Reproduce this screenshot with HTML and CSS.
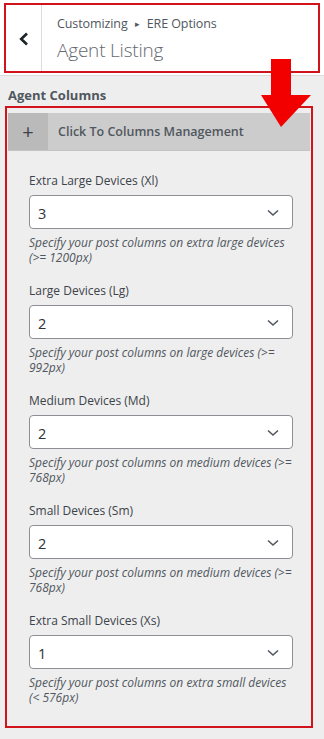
FILE: index.html
```html
<!DOCTYPE html>
<html>
<head>
<meta charset="utf-8">
<link rel="stylesheet" href="styles.css">
</head>
<body>
<div class="page">
  <header class="head">
    <div class="head-box">
      <div class="back">
        <svg width="12" height="14" viewBox="0 0 12 14"><path d="M9 1.5 L3.2 7 L9 12.5" fill="none" stroke="#1d2327" stroke-width="2.6"/></svg>
      </div>
      <div class="titles">
        <div class="crumb">Customizing <span class="tri">▸</span> ERE Options</div>
        <div class="title">Agent Listing</div>
      </div>
    </div>
  </header>

  <div class="section-title">Agent Columns</div>

  <div class="mark-box">
    <div class="acc-head">
      <div class="acc-plus">+</div>
      <div class="acc-text">Click To Columns Management</div>
    </div>
    <div class="acc-body">
      <div class="field">
        <div class="label">Extra Large Devices (Xl)</div>
        <div class="select"><span>3</span><svg class="chev" width="12" height="8" viewBox="0 0 12 8"><path d="M1 1.5 L6 6 L11 1.5" fill="none" stroke="#50575e" stroke-width="1.6"/></svg></div>
        <div class="desc">Specify your post columns on extra large devices (&gt;= 1200px)</div>
      </div>
      <div class="field">
        <div class="label">Large Devices (Lg)</div>
        <div class="select"><span>2</span><svg class="chev" width="12" height="8" viewBox="0 0 12 8"><path d="M1 1.5 L6 6 L11 1.5" fill="none" stroke="#50575e" stroke-width="1.6"/></svg></div>
        <div class="desc">Specify your post columns on large devices (&gt;= 992px)</div>
      </div>
      <div class="field">
        <div class="label">Medium Devices (Md)</div>
        <div class="select"><span>2</span><svg class="chev" width="12" height="8" viewBox="0 0 12 8"><path d="M1 1.5 L6 6 L11 1.5" fill="none" stroke="#50575e" stroke-width="1.6"/></svg></div>
        <div class="desc">Specify your post columns on medium devices (&gt;= 768px)</div>
      </div>
      <div class="field">
        <div class="label">Small Devices (Sm)</div>
        <div class="select"><span>2</span><svg class="chev" width="12" height="8" viewBox="0 0 12 8"><path d="M1 1.5 L6 6 L11 1.5" fill="none" stroke="#50575e" stroke-width="1.6"/></svg></div>
        <div class="desc">Specify your post columns on medium devices (&gt;= 768px)</div>
      </div>
      <div class="field">
        <div class="label">Extra Small Devices (Xs)</div>
        <div class="select"><span>1</span><svg class="chev" width="12" height="8" viewBox="0 0 12 8"><path d="M1 1.5 L6 6 L11 1.5" fill="none" stroke="#50575e" stroke-width="1.6"/></svg></div>
        <div class="desc">Specify your post columns on extra small devices (&lt; 576px)</div>
      </div>
    </div>
  </div>

  <svg class="arrow" width="52" height="70" viewBox="0 0 52 70"><path d="M10 0 H30 V36 H50 L20 68 L0 36 H10 Z" fill="#f20000"/></svg>
</div>
</body>
</html>
```

FILE: styles.css
```css
* { box-sizing: border-box; }
html, body { margin: 0; padding: 0; }
body {
  width: 324px;
  height: 739px;
  background: #eeeeee;
  font-family: "Open Sans", "Noto Sans", sans-serif;
  color: #3c434a;
  overflow: hidden;
}
.page { position: relative; height: 739px; }

.head {
  background: #fff;
  padding: 3px 4px 2px 4px;
  border-bottom: 1px solid #dcdcde;
}
.head-box {
  display: flex;
  height: 70px;
  border: 2px solid #d1141b;
}
.back {
  width: 36px;
  border-right: 1px solid #dcdcde;
  display: flex;
  align-items: center;
  justify-content: center;
  padding-top: 2px;
}
.titles {
  padding: 10px 0 0 15px;
}
.crumb {
  font-size: 12.5px;
  color: #50575e;
  line-height: 18px;
  letter-spacing: -0.1px;
}
.tri { font-size: 9px; position: relative; top: -1px; margin: 0 4px; }
.title {
  font-size: 19px;
  font-weight: 300;
  color: #646970;
  line-height: 28px;
  margin-top: 2px;
  letter-spacing: -0.2px;
}

.section-title {
  font-size: 13px;
  font-weight: 700;
  color: #50575e;
  padding: 10px 0 0 8px;
  line-height: 18px;
  height: 30px;
}

.mark-box {
  margin: 0 11px 0 5px;
  border: 2px solid #d1141b;
  padding: 5px 1px 0 1px;
  height: 622px;
}
.acc-head {
  display: flex;
  height: 38px;
  background: #cccccc;
  border-bottom: 1px solid #c4c4c4;
}
.acc-plus {
  width: 40px;
  background: #bababa;
  display: flex;
  align-items: center;
  justify-content: center;
  font-size: 20px;
  color: #3c434a;
  font-weight: 400;
}
.acc-text {
  display: flex;
  align-items: center;
  padding-left: 10px;
  font-size: 12.5px;
  font-weight: 600;
  color: #50575e;
}

.acc-body {
  padding: 20px 17px 0 21px;
}
.field { margin-bottom: 16px; }
.label {
  font-size: 12px;
  line-height: 20px;
  font-weight: 500;
  color: #3c434a;
  margin-bottom: 4px;
}
.select {
  height: 34px;
  background: #fff;
  border: 1px solid #8c8f94;
  border-radius: 4px;
  display: flex;
  align-items: center;
  justify-content: space-between;
  padding: 2px 13px 0 8px;
  font-size: 14.5px;
  color: #2c3338;
}
.desc {
  margin-top: 6px;
  font-size: 12px;
  line-height: 15px;
  font-style: italic;
  color: #50575e;
}

.arrow {
  position: absolute;
  left: 261px;
  top: 59px;
}
```
